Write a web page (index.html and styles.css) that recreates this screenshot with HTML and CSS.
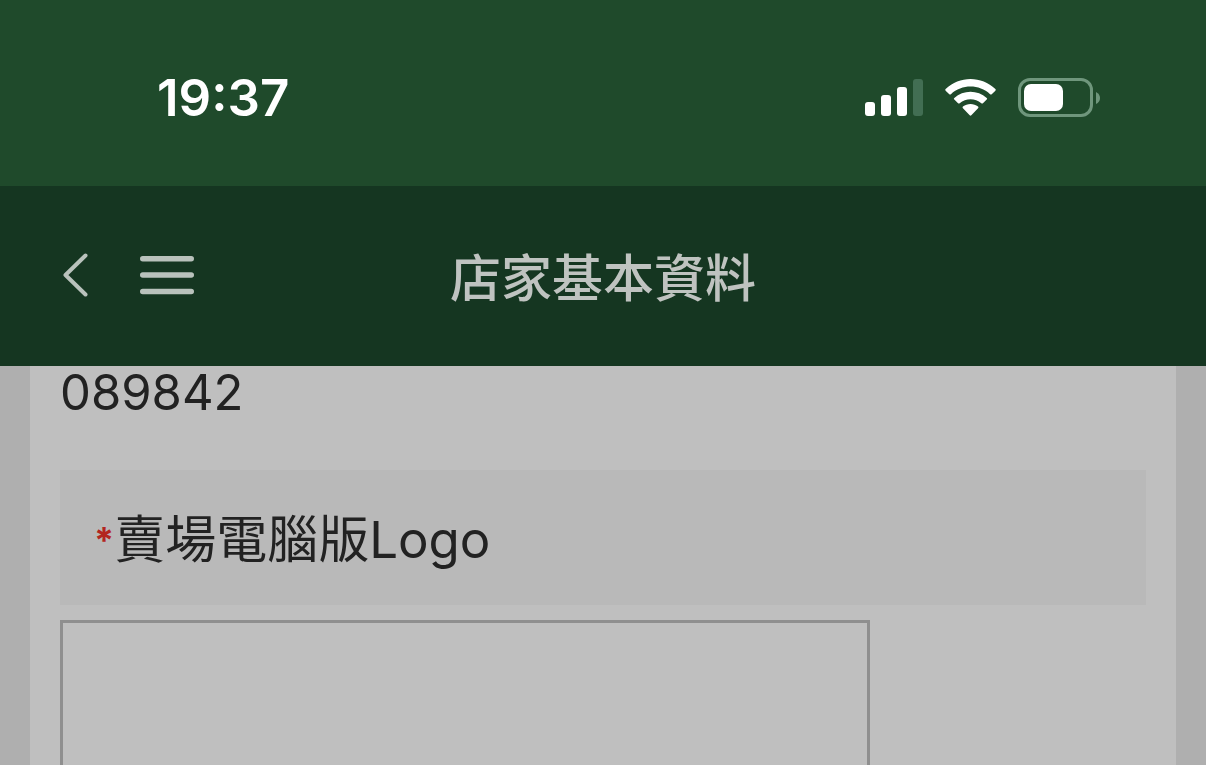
FILE: index.html
```html
<!DOCTYPE html>
<html lang="zh-Hant">
<head>
<meta charset="utf-8">
<meta name="viewport" content="width=device-width, initial-scale=1">
<title>店家基本資料</title>
<link rel="stylesheet" href="styles.css">
</head>
<body>
<div class="screen">
  <div class="status-bar">
    <time class="clock" datetime="19:37">19:37</time>
    <div class="indicators">
      <svg width="58" height="38" viewBox="0 0 58 38" fill="#fff" role="img" aria-label="訊號">
        <rect x="0" y="23" width="10" height="14" rx="3"/>
        <rect x="16" y="16" width="10" height="21" rx="3"/>
        <rect x="32" y="8" width="10" height="29" rx="3"/>
        <rect x="48" y="0" width="10" height="37" rx="3" fill="#426e53"/>
      </svg>
      <svg width="51" height="38" viewBox="0 0 50 38" preserveAspectRatio="none" fill="#fff" role="img" aria-label="Wi-Fi">
        <path d="M.6 10.1C14-3.3 36-3.3 49.4 10.1q.8.8 0 1.600L45.800 15.200q-.8.7-1.600 0C33.500 5 16.500 5 5.800 15.200q-.8.7-1.600 0L.6 11.700q-.8-.8 0-1.600Z"/>
        <path d="M9.100 18.900C18 10.700 32 10.700 40.900 18.900q.9.800 0 1.700L37.200 24.200q-.8.700-1.600 0C29.600 19 20.400 19 14.400 24.200q-.8.700-1.600 0L9.100 20.600q-.9-.9 0-1.700Z"/>
        <path d="M17.600 27.600C21.800 24 28.200 24 32.400 27.600q.9.800 0 1.700L25.800 36.300q-.8.800-1.600 0L17.600 29.300q-.9-.9 0-1.700Z"/>
      </svg>
      <svg width="82" height="38" viewBox="0 0 82 38" role="img" aria-label="電量">
        <rect x="1.500" y="0.500" width="72" height="36" rx="10.500" fill="none" stroke="#6f967c" stroke-width="3"/>
        <rect x="6" y="5" width="39" height="27" rx="7" fill="#fff"/>
        <path d="M78 13q4 2 4 6t-4 6Z" fill="#6f967c"/>
      </svg>
    </div>
  </div>
  <header class="nav-bar">
    <div class="nav-actions">
      <button class="icon-button" type="button" aria-label="返回">
        <svg width="28" height="46" viewBox="0 0 28 46" fill="none" stroke="#b9c2bc" stroke-width="4" stroke-linecap="round" stroke-linejoin="round"><path d="M25.500 3.500 5.500 23 25.500 42.500"/></svg>
      </button>
      <button class="icon-button" type="button" aria-label="選單">
        <svg width="54" height="46" viewBox="0 0 54 46" fill="#b9c2bc"><rect y="4" width="54" height="5.500" rx="2.750"/><rect y="20.300" width="54" height="5.500" rx="2.750"/><rect y="36.800" width="54" height="5.500" rx="2.750"/></svg>
      </button>
    </div>
    <h1 class="title">店家基本資料</h1>
    <div></div>
  </header>
  <main class="content">
    <section class="card">
      <p class="value">089842</p>
      <h2 class="field-label"><span class="required">*</span>賣場電腦版Logo</h2>
      <div class="logo-box"></div>
    </section>
  </main>
</div>
</body>
</html>
```
FILE: styles.css
```css
* {
  box-sizing: border-box;
}

body {
  margin: 0;
  background: #afafaf;
  color: #222;
  font-family: Inter, "Noto Sans CJK TC", sans-serif;
}

.screen {
  display: flex;
  flex-direction: column;
  height: 100vh;
  overflow: hidden;
}

.status-bar {
  display: flex;
  flex-shrink: 0;
  align-items: center;
  justify-content: space-between;
  padding: 66px 106px 56px 157px;
  background: #1f4a2b;
  color: #fff;
}

.clock {
  font-size: 51px;
  font-weight: 600;
  line-height: 64px;
}

.indicators {
  display: flex;
  align-items: center;
  gap: 22px;
}

.indicators svg {
  display: block;
  overflow: visible;
}

.nav-bar {
  display: grid;
  flex-shrink: 0;
  grid-template-columns: 1fr auto 1fr;
  align-items: start;
  padding: 54px 60px 48px;
  background: #153621;
}

.nav-actions {
  display: flex;
  gap: 52px;
  padding-top: 12px;
}

.icon-button {
  padding: 0;
  border: 0;
  background: none;
}

.icon-button svg {
  display: block;
}

.title {
  margin: 0;
  color: #bfc3c0;
  font-size: 51px;
  font-weight: 500;
  line-height: 78px;
}

.content {
  display: flex;
  flex: 1;
  min-height: 0;
  padding: 0 30px;
}

.card {
  flex: 1;
  padding: 0 30px;
  background: #bfbfbf;
}

.value {
  margin: 0 0 50px;
  font-size: 49px;
  line-height: 54px;
}

.field-label {
  display: flex;
  align-items: flex-start;
  margin: 0 0 15px;
  padding: 32px 34px 27px;
  background: #b9b9b9;
  font-size: 51px;
  font-weight: 400;
  line-height: 76px;
}

.required {
  color: #b3261f;
  font-size: 36px;
  font-weight: 700;
}

.logo-box {
  max-width: 810px;
  height: 300px;
  border: 3px solid #8f8f8f;
}
```
